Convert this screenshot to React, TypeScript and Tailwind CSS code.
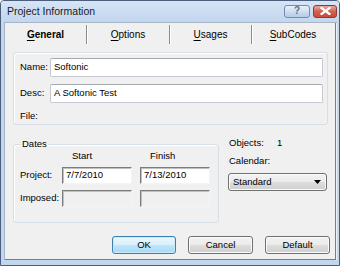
import React from 'react';

const font = "font-['Liberation_Sans',Arial,sans-serif]";

function VistaInput({ value, width }: { value: string; width: string }) {
  return (
    <div
      className={`${width} h-[19px] bg-white border border-[#c5cad2] border-t-[#a5a9b0] rounded-[2px] flex items-center pl-[3px] text-[9.5px] text-black`}
    >
      {value}
    </div>
  );
}

function SunkenInput({ value, disabled }: { value?: string; disabled?: boolean }) {
  return (
    <div
      className={`w-[70px] h-[17px] border border-t-[#7c7c7c] border-l-[#7c7c7c] border-r-[#f4f4f4] border-b-[#f4f4f4] shadow-[inset_1px_1px_0_#c0c0c0] flex items-center pl-[3px] text-[9.5px] text-black ${
        disabled ? 'bg-[#f0f0f0]' : 'bg-white'
      }`}
    >
      {value}
    </div>
  );
}

function Button({ label, primary }: { label: string; primary?: boolean }) {
  return (
    <div
      className={`h-[18px] rounded-[3px] border flex items-center justify-center text-[9.5px] text-black ${
        primary
          ? 'w-[64px] border-[#3c7fb1] bg-[linear-gradient(#eaf6fd_0%,#d9f0fc_50%,#bee6fd_51%,#a7d9f5_100%)] shadow-[inset_0_0_0_1px_#c8ecfb]'
          : 'w-[65px] border-[#707070] bg-[linear-gradient(#f2f2f2_0%,#ebebeb_50%,#dddddd_51%,#cfcfcf_100%)] shadow-[inset_0_0_0_1px_#fbfbfb]'
      }`}
    >
      {label}
    </div>
  );
}

const tabs = [
  { first: 'G', rest: 'eneral', w: 'w-[82px]' },
  { first: 'O', rest: 'ptions', w: 'w-[83px]' },
  { first: 'U', rest: 'sages', w: 'w-[82px]' },
  { first: 'S', rest: 'ubCodes', w: 'w-[82px]' },
];

export default function App() {
  return (
    <div
      className={`${font} w-[340px] h-[266px] bg-[#c2d6ef] border border-[#4b5f7c] rounded-t-[4px] flex flex-col overflow-hidden select-none`}
    >
      {/* Title bar */}
      <div className="h-[21px] flex items-center pl-[6px] pr-[2px] bg-gradient-to-b from-[#d6e5f6] to-[#c2d6ef]">
        <span className="text-[10.5px] text-[#1b1b1b] flex-1">Project Information</span>
        <div className="flex items-center gap-[3px] -mt-[1px]">
          <div className="w-[26px] h-[13px] rounded-[3px] border border-[#6f8db3] bg-gradient-to-b from-[#e9f1fa] to-[#b5cbe6] flex items-center justify-center text-[10px] font-bold text-[#5a6f8c] leading-none">
            ?
          </div>
          <div className="w-[24px] h-[13px] rounded-[3px] border border-[#8e3b33] bg-gradient-to-b from-[#e9a99f] via-[#d2604f] to-[#c84a38] flex items-center justify-center">
            <svg width="11" height="8" viewBox="0 0 11 8">
              <path d="M1.5 1 L9.5 7 M9.5 1 L1.5 7" stroke="#ffffff" strokeWidth="2.2" strokeLinecap="square" />
            </svg>
          </div>
        </div>
      </div>

      {/* Body */}
      <div className="ml-[3px] mr-[2px] mb-[5px] h-[238px] bg-[#f0f0f0] border-t border-l border-[#a9b6c6]">
        <div className="h-full border-r border-b border-[#7e7e7e] mr-[1px] flex flex-col">
          {/* Tabs */}
          <div className="h-[21px] flex items-center">
            {tabs.map((t, i) => (
              <div
                key={t.first}
                className={`${t.w} h-[19px] mt-[1px] flex items-center justify-center text-[10px] text-black ${
                  i < 3 ? 'border-r border-[#8c8c8c] shadow-[1px_0_0_#ffffff]' : ''
                } ${i === 0 ? 'font-bold' : ''}`}
              >
                <span>
                  <span className="underline underline-offset-[2px]">{t.first}</span>
                  {t.rest}
                </span>
              </div>
            ))}
          </div>

          {/* Group 1 */}
          <div className="ml-[8px] mt-[8px] w-[315px] h-[73px] border border-[#d5dfe5] rounded-[3px] shadow-[inset_1px_1px_0_#ffffff] pl-[6px] pt-[5px] text-[9.5px] text-black">
            <div className="flex items-center">
              <span className="w-[30px]">Name:</span>
              <VistaInput value="Softonic" width="w-[273px]" />
            </div>
            <div className="flex items-center mt-[7px]">
              <span className="w-[30px]">Desc:</span>
              <VistaInput value="A Softonic Test" width="w-[273px]" />
            </div>
            <div className="mt-[7px] leading-[12px]">File:</div>
          </div>

          {/* Dates + right column */}
          <div className="flex mt-[13px] ml-[8px]">
            <fieldset className="w-[206px] h-[85px] border border-[#d5dfe5] rounded-[3px] shadow-[inset_1px_1px_0_#ffffff] text-[9.5px] text-black">
              <legend className="ml-[7px] px-[1px] leading-[12px]">Dates</legend>
              <div className="flex pl-[48px] leading-[12px]">
                <span className="w-[78px] pl-[10px]">Start</span>
                <span className="pl-[10px]">Finish</span>
              </div>
              <div className="flex items-center mt-[5px] pl-[6px]">
                <span className="w-[42px]">Project:</span>
                <SunkenInput value="7/7/2010" />
                <div className="w-[8px]" />
                <SunkenInput value="7/13/2010" />
              </div>
              <div className="flex items-center mt-[6px] pl-[6px]">
                <span className="w-[42px]">Imposed:</span>
                <SunkenInput disabled />
                <div className="w-[8px]" />
                <SunkenInput disabled />
              </div>
            </fieldset>

            <div className="ml-[9px] text-[9.5px] text-black leading-[12px]">
              <div className="flex pl-[1px] -mt-[1px]">
                <span className="w-[48px]">Objects:</span>
                <span>1</span>
              </div>
              <div className="mt-[6px] pl-[1px]">Calendar:</div>
              <div className="mt-[6px] w-[99px] h-[18px] rounded-[3px] border border-[#707070] bg-[linear-gradient(#f2f2f2_0%,#ebebeb_50%,#dddddd_51%,#cfcfcf_100%)] shadow-[inset_0_0_0_1px_#fbfbfb] flex items-center justify-between pl-[4px] pr-[5px]">
                <span>Standard</span>
                <svg width="7" height="4" viewBox="0 0 7 4">
                  <path d="M0 0 H7 L3.5 4 Z" fill="#000000" />
                </svg>
              </div>
            </div>
          </div>

          {/* Buttons */}
          <div className="flex justify-end gap-[12px] mt-[13px] pr-[5px]">
            <Button label="OK" primary />
            <Button label="Cancel" />
            <Button label="Default" />
          </div>
        </div>
      </div>
    </div>
  );
}
